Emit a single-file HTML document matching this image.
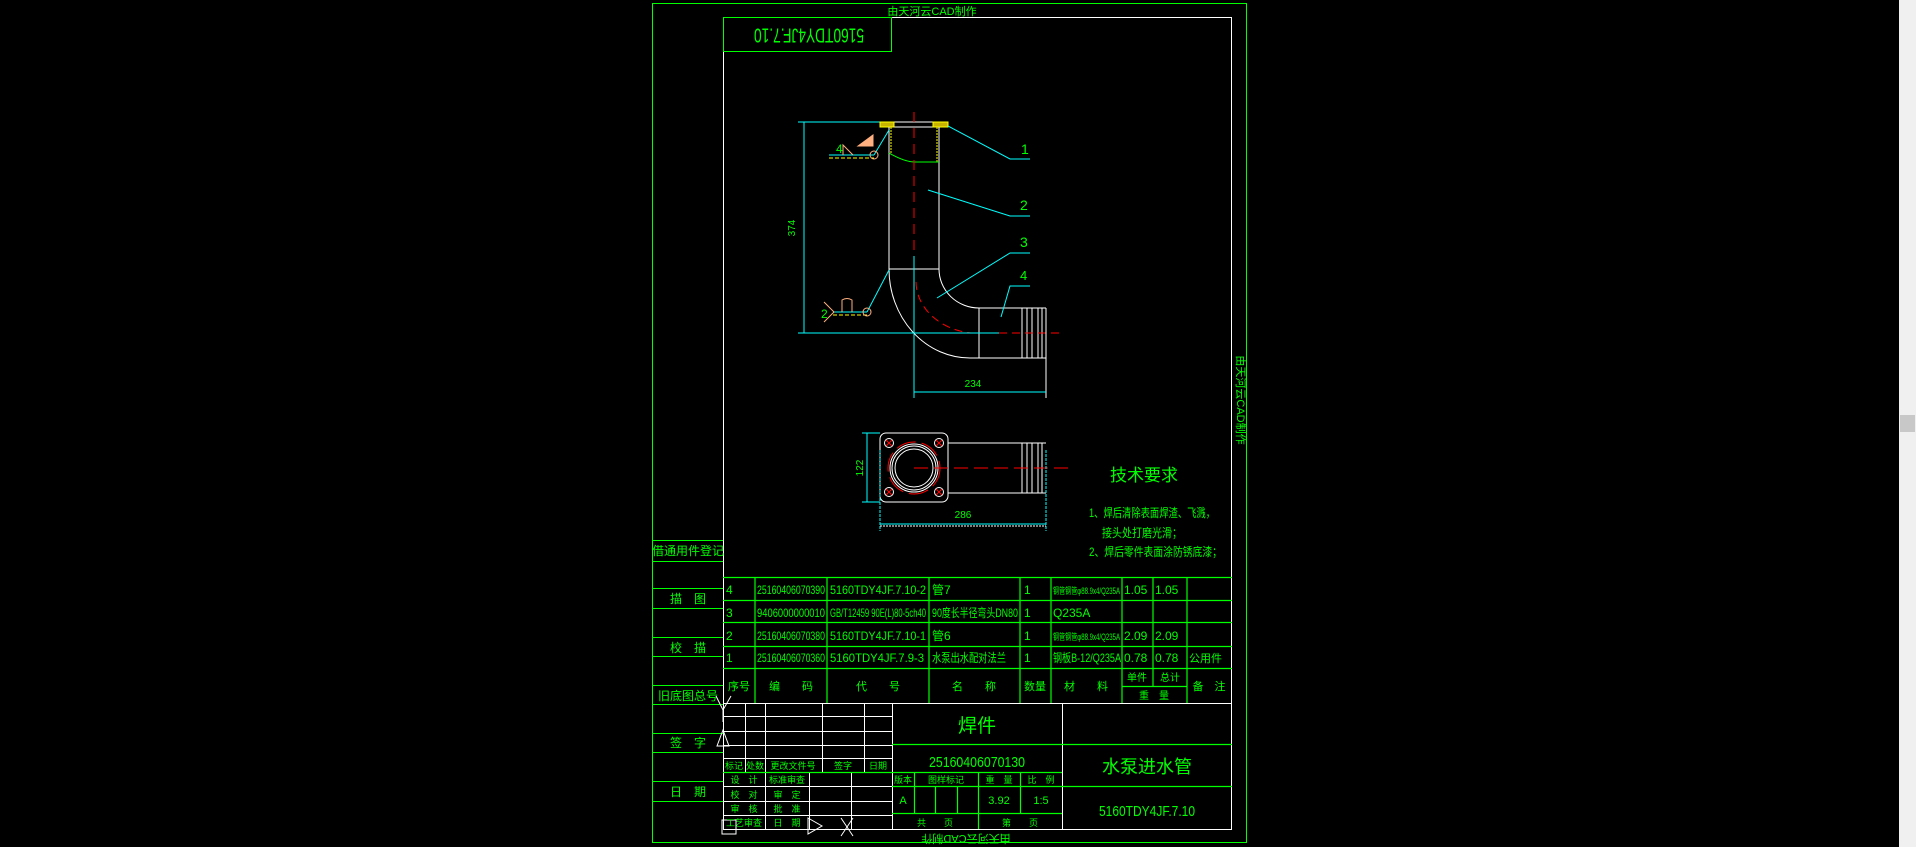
<!DOCTYPE html>
<html><head><meta charset="utf-8"><style>
html,body{margin:0;padding:0;background:#000;width:1916px;height:847px;overflow:hidden}
svg{display:block}
text{font-family:"Liberation Sans","Noto Sans CJK SC",sans-serif;fill:#00ff00}
</style></head><body>
<svg width="1916" height="847" viewBox="0 0 1916 847" xmlns="http://www.w3.org/2000/svg">
<rect x="0" y="0" width="1916" height="847" fill="#000"/>
<rect x="1899" y="0" width="17" height="847" fill="#f0f0f0"/>
<rect x="1900" y="415" width="15" height="17" fill="#c8c8c8"/>

<!-- frames -->
<rect x="652.5" y="3.5" width="594" height="839" fill="none" stroke="#00ff00" stroke-width="1"/>
<rect x="723.5" y="17.5" width="508" height="812" fill="none" stroke="#fff" stroke-width="1"/>
<rect x="723.5" y="17.5" width="168" height="34" fill="none" stroke="#00ff00"/>
<text x="932" y="15" font-size="11" text-anchor="middle" fill="#7fff7f">由天河云CAD制作</text>
<text transform="translate(809,34) rotate(180)" font-size="20" text-anchor="middle" dominant-baseline="middle" textLength="110" lengthAdjust="spacingAndGlyphs">5160TDY4JF.7.10</text>
<text transform="translate(1240,400) rotate(90)" font-size="11" text-anchor="middle" dominant-baseline="middle" fill="#7fff7f">由天河云CAD制作</text>
<text transform="translate(966,838) rotate(180)" font-size="11" text-anchor="middle" dominant-baseline="middle" fill="#7fff7f">由天河云CAD制作</text>

<!-- side view -->
<g fill="none" stroke-width="1">
<line x1="798" y1="122" x2="948" y2="122" stroke="#00ffff"/>
<rect x="880" y="122" width="68" height="5" stroke="#fff"/>
<rect x="880" y="122" width="14" height="5" fill="#c8b400" stroke="#ff0"/>
<rect x="933" y="122" width="15" height="5" fill="#c8b400" stroke="#ff0"/>
<line x1="889" y1="127" x2="889" y2="269" stroke="#fff"/>
<line x1="939" y1="127" x2="939" y2="269" stroke="#fff"/>
<line x1="891" y1="127" x2="891" y2="153" stroke="#ff0" stroke-dasharray="2,1"/>
<line x1="937" y1="127" x2="937" y2="162" stroke="#ff0" stroke-dasharray="2,1"/>
<path d="M889 153 Q905 162 915 162 L939 162" stroke="#00ff00"/>
<line x1="889" y1="269" x2="939" y2="269" stroke="#fff"/>
<line x1="914" y1="112" x2="914" y2="256" stroke="#f00" stroke-dasharray="10,6"/>
<line x1="914" y1="256" x2="914" y2="398" stroke="#00ffff"/>
<path d="M889 269 A81 89 0 0 0 970 358" stroke="#fff"/>
<path d="M939 269 A40 39 0 0 0 979 308" stroke="#fff"/>
<path d="M916 282 A63 52 0 0 0 971 333" stroke="#f00" stroke-dasharray="8,5"/>
<line x1="979" y1="308" x2="1046" y2="308" stroke="#fff"/>
<line x1="970" y1="358" x2="1046" y2="358" stroke="#fff"/>
<line x1="979" y1="308" x2="979" y2="358" stroke="#fff"/>
<line x1="1022" y1="308" x2="1022" y2="358" stroke="#fff"/>
<line x1="1027" y1="308" x2="1027" y2="358" stroke="#fff"/>
<line x1="1032" y1="308" x2="1032" y2="358" stroke="#fff"/>
<line x1="1038" y1="308" x2="1038" y2="358" stroke="#fff"/>
<line x1="1042" y1="308" x2="1042" y2="358" stroke="#fff"/>
<line x1="798" y1="333" x2="999" y2="333" stroke="#00ffff"/>
<line x1="999" y1="333" x2="1064" y2="333" stroke="#f00" stroke-dasharray="8,5"/>
<line x1="804" y1="122" x2="804" y2="333" stroke="#00ffff"/>
<line x1="1046" y1="308" x2="1046" y2="398" stroke="#fff"/>
<line x1="914" y1="392" x2="1046" y2="392" stroke="#00ffff"/>
<!-- leaders -->
<polyline points="948,126 1010,159 1030,159" stroke="#00ffff"/>
<polyline points="928,190 1010,216 1030,216" stroke="#00ffff"/>
<polyline points="937,298 1010,253 1030,253" stroke="#00ffff"/>
<polyline points="1001,317 1010,286 1030,286" stroke="#00ffff"/>
<!-- weld symbols -->
<line x1="889" y1="130" x2="874" y2="155" stroke="#00ffff"/>
<line x1="829" y1="155" x2="874" y2="155" stroke="#00ffff"/>
<line x1="829" y1="158" x2="874" y2="158" stroke="#ff0" stroke-dasharray="4,2"/>
<path d="M843 155 L843 145 L853 155" stroke="#ffb080"/>
<path d="M858 146 L873 135 L873 146 Z" fill="#ffb080" stroke="#ffb080"/>
<circle cx="874" cy="155" r="4" stroke="#ffb080"/>
<line x1="889" y1="270" x2="867" y2="312" stroke="#00ffff"/>
<line x1="833" y1="312" x2="867" y2="312" stroke="#00ffff"/>
<line x1="833" y1="315" x2="867" y2="315" stroke="#ff0" stroke-dasharray="4,2"/>
<path d="M824 302 L834 312 L824 322" stroke="#ffb080"/>
<path d="M842 312 L842 300 Q847 297 852 300 L852 312" stroke="#ffb080"/>
<circle cx="867" cy="312" r="4" stroke="#ffb080"/>
</g>
<text x="1021" y="154" font-size="14">1</text>
<text x="1020" y="210" font-size="14">2</text>
<text x="1020" y="247" font-size="14">3</text>
<text x="1020" y="280" font-size="13">4</text>
<text x="836" y="153" font-size="12">4</text>
<text x="821" y="318" font-size="12">2</text>
<text transform="translate(795,228) rotate(-90)" font-size="10" text-anchor="middle" fill="#f00">374</text>
<text x="973" y="387" font-size="10" text-anchor="middle" fill="#f00">234</text>

<!-- bottom view -->
<g fill="none" stroke-width="1">
<rect x="880" y="433" width="68" height="69" rx="6" stroke="#fff"/>
<circle cx="914" cy="468" r="26" stroke="#f00" stroke-dasharray="20,6"/>
<circle cx="914" cy="468" r="24" stroke="#fff"/>
<circle cx="914" cy="468" r="22" stroke="#fff"/>
<circle cx="914" cy="468" r="19" stroke="#fff"/>
<circle cx="889" cy="443" r="4.5" stroke="#fff"/>
<circle cx="939" cy="443" r="4.5" stroke="#fff"/>
<circle cx="889" cy="492" r="4.5" stroke="#fff"/>
<circle cx="939" cy="492" r="4.5" stroke="#fff"/>
<path d="M886 440l6 6M892 440l-6 6M936 440l6 6M942 440l-6 6M886 489l6 6M892 489l-6 6M936 489l6 6M942 489l-6 6" stroke="#f00"/>
<line x1="948" y1="443" x2="1046" y2="443" stroke="#fff"/>
<line x1="948" y1="493" x2="1046" y2="493" stroke="#fff"/>
<path d="M1022 443V493M1027 443V493M1032 443V493M1038 443V493M1042 443V493" stroke="#fff"/>
<line x1="914" y1="468" x2="1071" y2="468" stroke="#f00" stroke-dasharray="14,6"/>
<line x1="862" y1="433" x2="880" y2="433" stroke="#00ffff"/>
<line x1="862" y1="502" x2="880" y2="502" stroke="#00ffff"/>
<line x1="867" y1="433" x2="867" y2="502" stroke="#00ffff"/>
<line x1="880" y1="450" x2="880" y2="531" stroke="#00ffff" stroke-dasharray="3,1"/>
<line x1="1046" y1="450" x2="1046" y2="531" stroke="#00ffff" stroke-dasharray="3,1"/>
<line x1="880" y1="524" x2="1046" y2="524" stroke="#00ffff"/>
<line x1="880" y1="526" x2="1046" y2="526" stroke="#fff" stroke-dasharray="2,1"/>
</g>
<text transform="translate(863,468) rotate(-90)" font-size="10" text-anchor="middle" fill="#f00">122</text>
<text x="963" y="518" font-size="10" text-anchor="middle" fill="#f00">286</text>

<text x="1144" y="481" font-size="17" text-anchor="middle">技术要求</text>
<text x="1089" y="517" font-size="12" textLength="126" lengthAdjust="spacingAndGlyphs">1、焊后清除表面焊渣、飞溅，</text>
<text x="1102" y="537" font-size="12" textLength="80" lengthAdjust="spacingAndGlyphs">接头处打磨光滑；</text>
<text x="1089" y="556" font-size="12" textLength="133" lengthAdjust="spacingAndGlyphs">2、焊后零件表面涂防锈底漆；</text>

<!-- left column -->
<g stroke="#00ff00" stroke-width="1">
<path d="M652 540.5H723M652 561.5H723M652 588.5H723M652 608.5H723M652 637.5H723M652 656.5H723M652 685.5H723M652 704.5H723M652 733.5H723M652 752.5H723M652 781.5H723M652 801.5H723"/>
</g>
<g font-size="12" text-anchor="middle">
<text x="688" y="555">借通用件登记</text>
<text x="688" y="603">描　图</text>
<text x="688" y="652">校　描</text>
<text x="688" y="700">旧底图总号</text>
<text x="688" y="747">签　字</text>
<text x="688" y="796">日　期</text>
</g>

<!-- parts table -->
<g stroke="#00ff00" stroke-width="1.2" fill="none">
<path d="M723 577.5H1232M723 600.5H1232M723 622.5H1232M723 646.5H1232M723 668.5H1232M1122 686.5H1187"/>
<path d="M755 577V703M827 577V703M929 577V703M1020 577V703M1051 577V703M1122 577V703M1153 577V686M1187 577V703"/>
</g>
<line x1="723" y1="703.5" x2="1232" y2="703.5" stroke="#fff"/>
<g font-size="12">
<text x="726" y="594">4</text><text x="757" y="594" textLength="68" lengthAdjust="spacingAndGlyphs">25160406070390</text><text x="830" y="594" textLength="96" lengthAdjust="spacingAndGlyphs">5160TDY4JF.7.10-2</text><text x="932" y="594">管7</text><text x="1024" y="594">1</text><text x="1053" y="594" font-size="9" textLength="67" lengthAdjust="spacingAndGlyphs">钢管钢管φ88.9x4/Q235A</text><text x="1124" y="594">1.05</text><text x="1155" y="594">1.05</text>
<text x="726" y="617">3</text><text x="757" y="617" textLength="68" lengthAdjust="spacingAndGlyphs">9406000000010</text><text x="830" y="617" textLength="96" lengthAdjust="spacingAndGlyphs">GB/T12459  90E(L)80-5ch40</text><text x="932" y="617" textLength="86" lengthAdjust="spacingAndGlyphs">90度长半径弯头DN80</text><text x="1024" y="617">1</text><text x="1053" y="617">Q235A</text>
<text x="726" y="640">2</text><text x="757" y="640" textLength="68" lengthAdjust="spacingAndGlyphs">25160406070380</text><text x="830" y="640" textLength="96" lengthAdjust="spacingAndGlyphs">5160TDY4JF.7.10-1</text><text x="932" y="640">管6</text><text x="1024" y="640">1</text><text x="1053" y="640" font-size="9" textLength="67" lengthAdjust="spacingAndGlyphs">钢管钢管φ88.9x4/Q235A</text><text x="1124" y="640">2.09</text><text x="1155" y="640">2.09</text>
<text x="726" y="662">1</text><text x="757" y="662" textLength="68" lengthAdjust="spacingAndGlyphs">25160406070360</text><text x="830" y="662" textLength="94" lengthAdjust="spacingAndGlyphs">5160TDY4JF.7.9-3</text><text x="932" y="662" textLength="74" lengthAdjust="spacingAndGlyphs">水泵出水配对法兰</text><text x="1024" y="662">1</text><text x="1053" y="662" textLength="68" lengthAdjust="spacingAndGlyphs">钢板B-12/Q235A</text><text x="1124" y="662">0.78</text><text x="1155" y="662">0.78</text><text x="1189" y="662" font-size="11">公用件</text>
</g>
<g font-size="11" text-anchor="middle">
<text x="739" y="690">序号</text><text x="791" y="690">编　　码</text><text x="878" y="690">代　　号</text><text x="974" y="690">名　　称</text><text x="1035" y="690">数量</text><text x="1086" y="690">材　　料</text>
<text x="1137" y="681" font-size="10">单件</text><text x="1170" y="681" font-size="10">总计</text><text x="1154" y="699" font-size="10">重　量</text><text x="1209" y="690">备　注</text>
</g>

<!-- title block -->
<g stroke="#fff" stroke-width="1" fill="none">
<path d="M723 716.5H892M723 731.5H892M723 745.5H892M723 758.5H892"/>
<path d="M745.5 703V772M765.5 703V829M822.5 703V772M864.5 703V772"/>
<path d="M892.5 703V829M1062.5 703V829"/>
<path d="M723 786.5H892M723 801.5H892M723 815.5H892M809.5 772V829M851.5 772V829"/>
<rect x="722" y="820" width="14" height="14"/>
<path d="M716 696L723 710L731 696M723 710V722"/>
<path d="M717 746L723 730L729 746Z"/>
<path d="M808 818L822 826L808 834Z"/>
<path d="M841 818L853 836M853 818L841 836"/>
</g>
<g stroke="#00ff00" stroke-width="1.2" fill="none">
<path d="M723 772.5H892"/>
<path d="M892 744.5H1232M892 772.5H1062M892 786.5H1062M1062 786.5H1232M892 813.5H1062"/>
<path d="M914.5 772V813M978.5 772V829M1020.5 772V813M935.5 786V813M957.5 786V813"/>
</g>
<g font-size="9" text-anchor="middle">
<text x="734" y="769">标记</text><text x="755" y="769">处数</text><text x="793" y="769">更改文件号</text><text x="843" y="769">签字</text><text x="878" y="769">日期</text>
<text x="744" y="783">设　计</text><text x="787" y="783">标准审查</text>
<text x="744" y="798">校　对</text><text x="787" y="798">审　定</text>
<text x="744" y="812">审　核</text><text x="787" y="812">批　准</text>
<text x="744" y="826">工艺审查</text><text x="787" y="826">日　期</text>
<text x="903" y="783">版本</text><text x="946" y="783">图样标记</text><text x="999" y="783">重　量</text><text x="1041" y="783">比　例</text>
<text x="903" y="804" font-size="11">A</text><text x="999" y="804" font-size="11">3.92</text><text x="1041" y="804" font-size="11">1:5</text>
<text x="935" y="826">共　　页</text><text x="1020" y="826">第　　页</text>
</g>
<text x="977" y="732" font-size="19" text-anchor="middle">焊件</text>
<text x="977" y="767" font-size="15" text-anchor="middle" textLength="96" lengthAdjust="spacingAndGlyphs">25160406070130</text>
<text x="1147" y="773" font-size="18" text-anchor="middle">水泵进水管</text>
<text x="1147" y="816" font-size="15" text-anchor="middle" textLength="96" lengthAdjust="spacingAndGlyphs">5160TDY4JF.7.10</text>
</svg>
</body></html>
